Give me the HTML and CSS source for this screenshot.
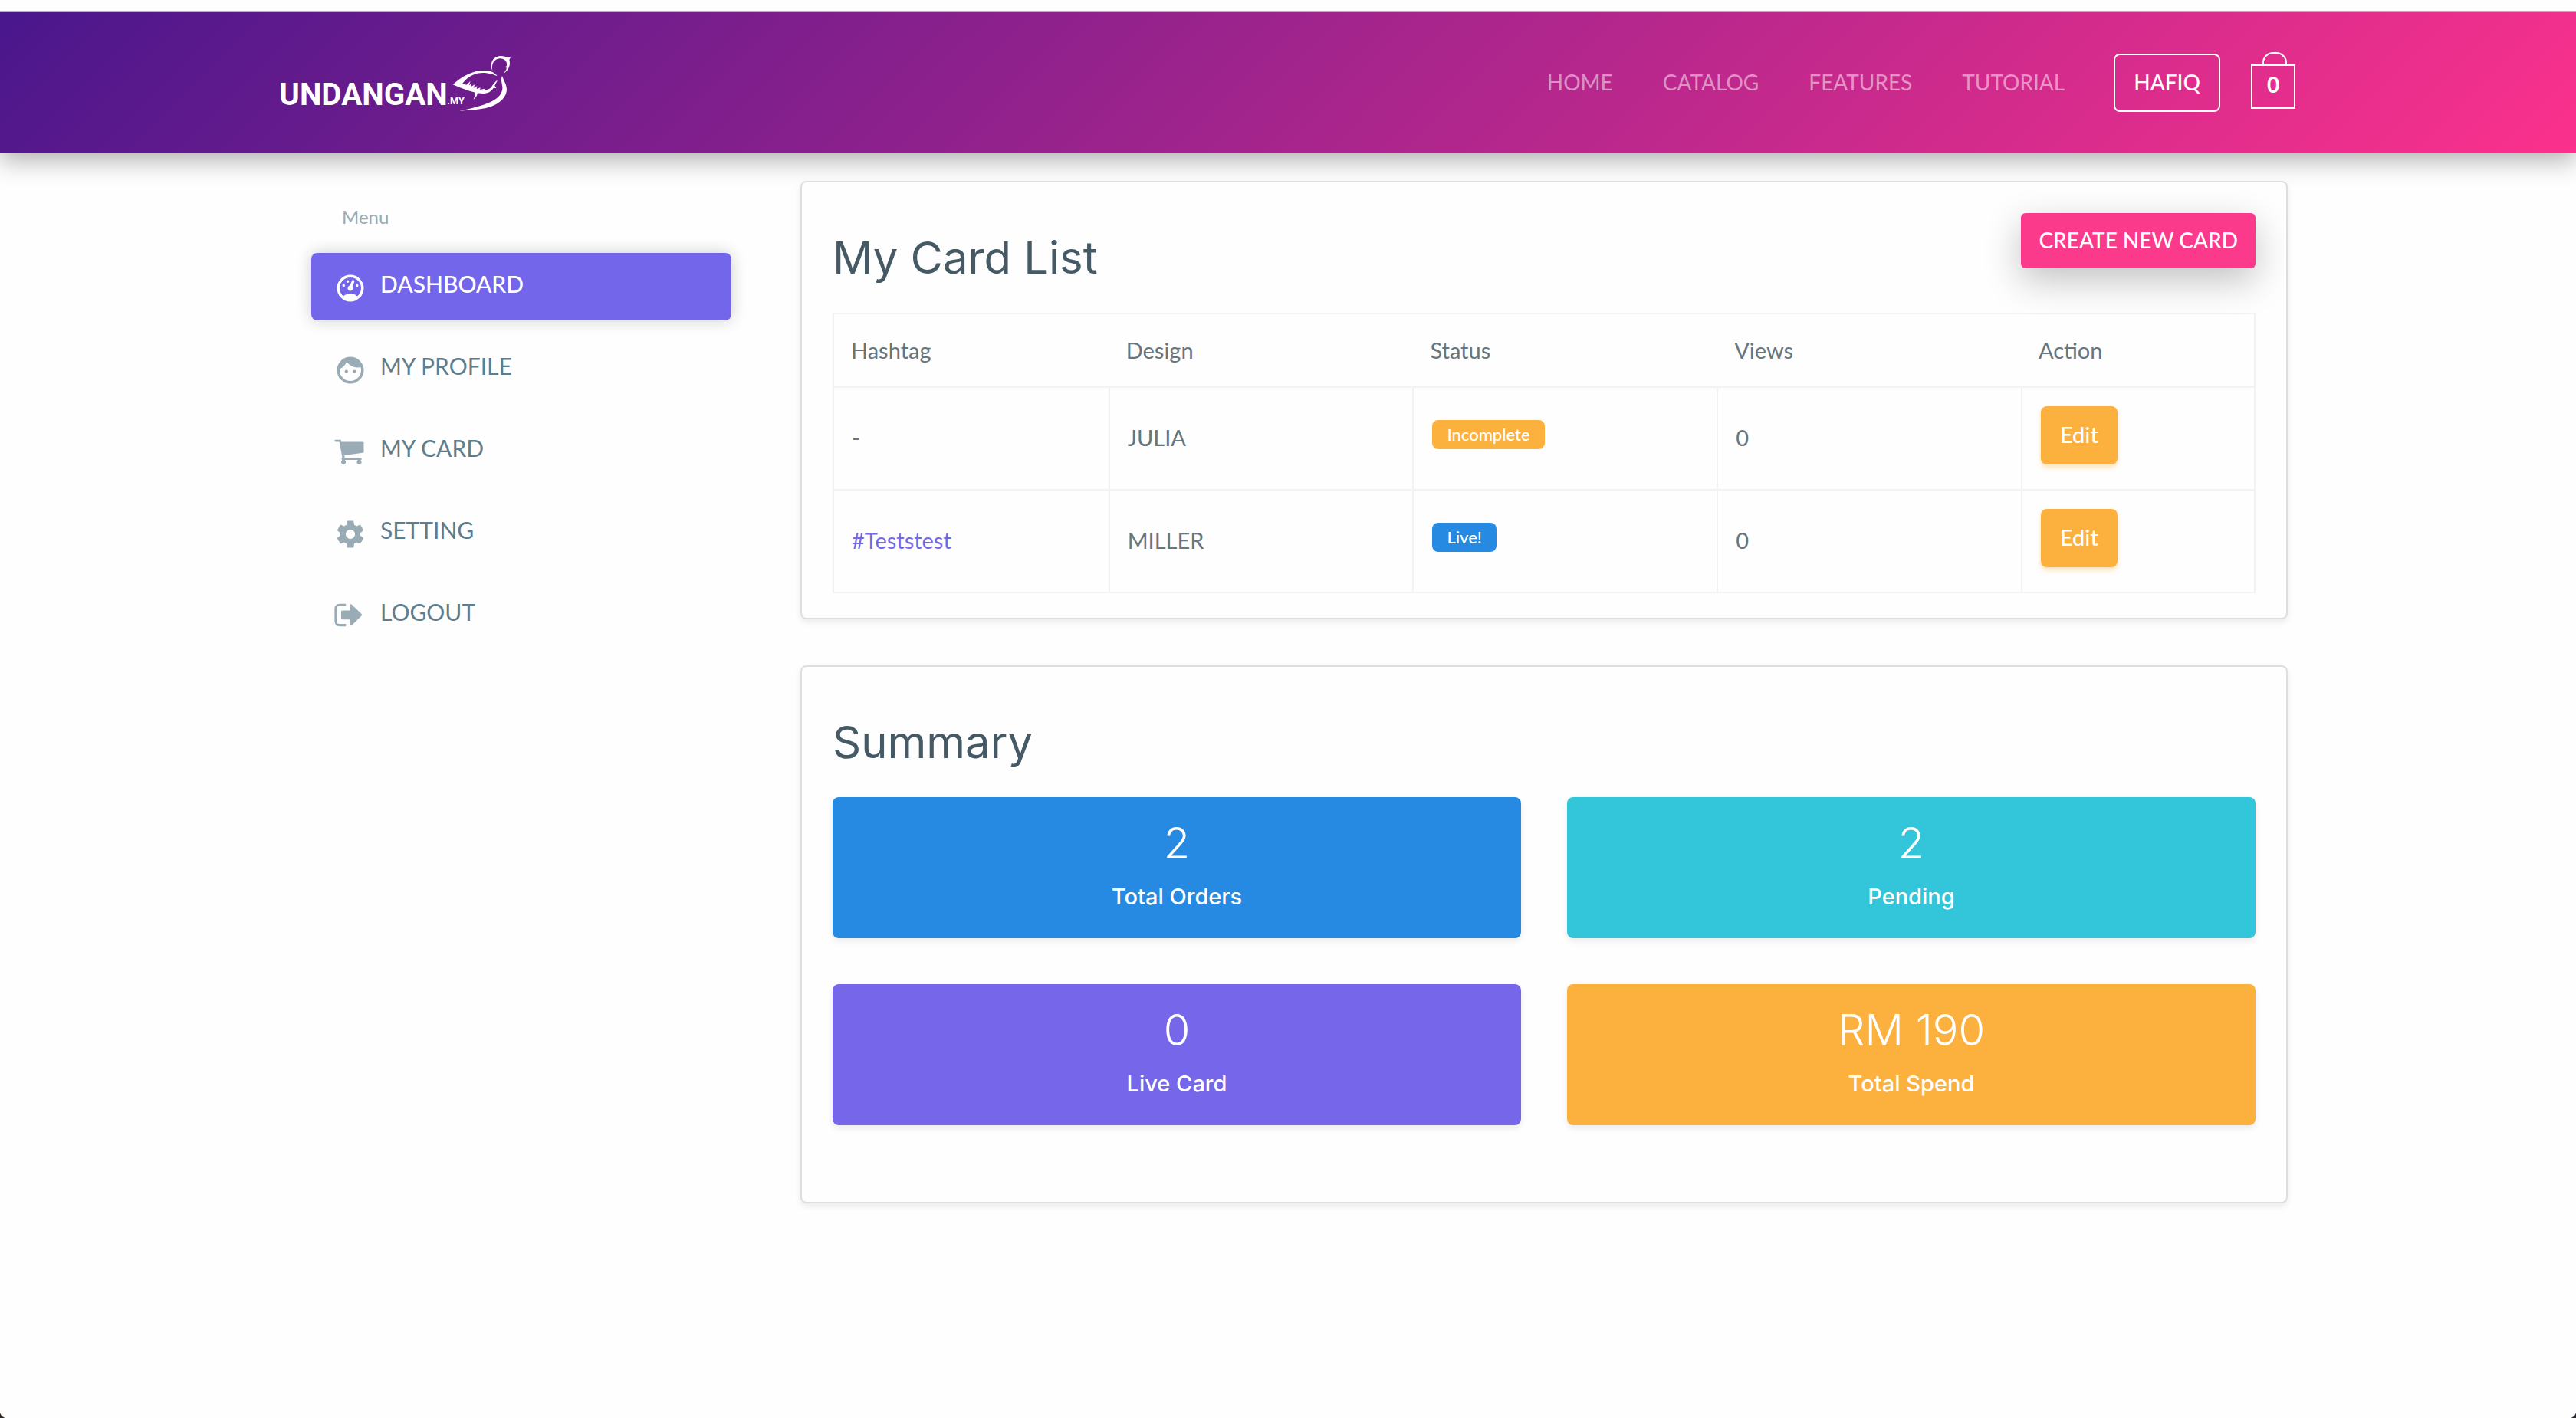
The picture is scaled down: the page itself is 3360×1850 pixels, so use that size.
FILE: index.html
```html
<!DOCTYPE html>
<html lang="en">
<head>
<meta charset="utf-8">
<title>Dashboard - Undangan.my</title>
<link rel="stylesheet" href="styles.css">
</head>
<body>
<div class="top-strip"></div>
<header class="site-header">
  <div class="header-inner">
    <a class="logo" href="#" aria-label="Undangan.my">
      <svg viewBox="78 60 906 225" width="302" height="75">
        <text class="logo-name" x="73" y="259">UNDANGAN</text>
        <text class="logo-tld" x="730" y="256">.MY</text>
        <path d="M907 123C894 94 910 66 941 66C953 66 961 69 966 73L978 71L973 81C979 101 971 122 950 135C956 127 961 120 963 113L957 110L963 104C966 86 951 75 936 76C913 78 902 97 907 123Z"/>
        <path fill-rule="evenodd" d="M752 178C787 146 828 123 875 123C896 123 913 129 923 141C930 146 920 142 905 137C878 130 855 131 836 138C817 145 802 158 790 173C796 176 801 178 805 179L821 164L815 181L826 174L823 186L838 178L833 191L847 184L845 195L860 190L858 198L877 194L874 200C886 199 896 196 902 189C908 180 915 168 928 159L916 182L922 192L911 191C903 205 889 213 868 213C827 211 789 194 752 178Z"/>
        <path d="M838 207L849 206C849 219 843 229 832 236C838 227 840 217 838 207Z"/>
        <path d="M945 143C949 159 963 176 963 199C961 233 926 261 878 271C846 277 812 279 778 281C824 273 868 260 900 246C938 229 948 205 946 187C944 170 939 160 945 143Z"/>
      </svg>
    </a>
    <nav class="main-nav" aria-label="Main">
      <a href="#">HOME</a>
      <a href="#">CATALOG</a>
      <a href="#">FEATURES</a>
      <a href="#">TUTORIAL</a>
    </nav>
    <button class="user-button" type="button">HAFIQ</button>
    <button class="bag" type="button" aria-label="Shopping bag">0</button>
  </div>
</header>

<main class="page">
  <aside class="sidebar">
    <p class="menu-title">Menu</p>
    <nav class="menu" aria-label="Account">
      <a class="menu-item active" href="#">
        <svg class="icon" viewBox="0 0 24 24"><path d="M12,2A10,10 0 0,0 2,12A10,10 0 0,0 12,22A10,10 0 0,0 22,12A10,10 0 0,0 12,2M12,4A8,8 0 0,1 20,12C20,14.4 19,16.5 17.3,18C15.9,16.7 14,16 12,16C10,16 8.2,16.7 6.7,18C5,16.5 4,14.4 4,12A8,8 0 0,1 12,4M14,5.89C13.62,5.9 13.26,6.15 13.1,6.54L11.81,9.77L11.71,10C11,10.13 10.41,10.6 10.14,11.26C9.73,12.29 10.23,13.45 11.26,13.86C12.29,14.27 13.45,13.77 13.86,12.74C14.12,12.08 14,11.32 13.57,10.76L13.67,10.5L14.96,7.29L14.97,7.26C15.17,6.75 14.92,6.17 14.41,5.96C14.28,5.91 14.15,5.89 14,5.89M10,6A1,1 0 0,0 9,7A1,1 0 0,0 10,8A1,1 0 0,0 11,7A1,1 0 0,0 10,6M7,9A1,1 0 0,0 6,10A1,1 0 0,0 7,11A1,1 0 0,0 8,10A1,1 0 0,0 7,9M17,9A1,1 0 0,0 16,10A1,1 0 0,0 17,11A1,1 0 0,0 18,10A1,1 0 0,0 17,9Z"/></svg>
        <span>DASHBOARD</span>
      </a>
      <a class="menu-item" href="#">
        <svg class="icon" viewBox="0 0 24 24"><path d="M9,11.75A1.25,1.25 0 0,0 7.75,13A1.25,1.25 0 0,0 9,14.25A1.25,1.25 0 0,0 10.25,13A1.25,1.25 0 0,0 9,11.75M15,11.75A1.25,1.25 0 0,0 13.75,13A1.25,1.25 0 0,0 15,14.25A1.25,1.25 0 0,0 16.25,13A1.25,1.25 0 0,0 15,11.75M12,2A10,10 0 0,0 2,12A10,10 0 0,0 12,22A10,10 0 0,0 22,12A10,10 0 0,0 12,2M12,20C7.59,20 4,16.41 4,12C4,11.71 4,11.42 4.05,11.14C6.41,10.09 8.28,8.16 9.26,5.77C11.07,8.33 14.05,10 17.42,10C18.2,10 18.95,9.91 19.67,9.74C19.88,10.45 20,11.21 20,12C20,16.41 16.41,20 12,20Z"/></svg>
        <span>MY PROFILE</span>
      </a>
      <a class="menu-item" href="#">
        <svg class="icon" viewBox="141 833 108 108"><path d="M145 845H161Q164 845 164 848V852H237Q240 852 240 855V886Q240 889 237 889L175 897L176 905H230Q233 905 233 909Q233 913 230 913H228A8 8 0 1 1 221 913H176A8 8 0 1 1 168 913Q165 911 165 908Q165 906 168 905L158 852H145Q142 851 142 848Q142 845 145 845Z"/></svg>
        <span>MY CARD</span>
      </a>
      <a class="menu-item" href="#">
        <svg class="icon" viewBox="0 0 24 24"><path d="M12,15.5A3.5,3.5 0 0,1 8.5,12A3.5,3.5 0 0,1 12,8.5A3.5,3.5 0 0,1 15.5,12A3.5,3.5 0 0,1 12,15.5M19.43,12.97C19.47,12.65 19.5,12.33 19.5,12C19.5,11.67 19.47,11.34 19.43,11L21.54,9.37C21.73,9.22 21.78,8.95 21.66,8.73L19.66,5.27C19.54,5.05 19.27,4.96 19.05,5.05L16.56,6.05C16.04,5.66 15.5,5.32 14.87,5.07L14.5,2.42C14.46,2.18 14.25,2 14,2H10C9.75,2 9.54,2.18 9.5,2.42L9.13,5.07C8.5,5.32 7.96,5.66 7.44,6.05L4.95,5.05C4.73,4.96 4.46,5.05 4.34,5.27L2.34,8.73C2.21,8.95 2.27,9.22 2.46,9.37L4.57,11C4.53,11.34 4.5,11.67 4.5,12C4.5,12.33 4.53,12.65 4.57,12.97L2.46,14.63C2.27,14.78 2.21,15.05 2.34,15.27L4.34,18.73C4.46,18.95 4.73,19.03 4.95,18.95L7.44,17.94C7.96,18.34 8.5,18.68 9.13,18.93L9.5,21.58C9.54,21.82 9.75,22 10,22H14C14.25,22 14.46,21.82 14.5,21.58L14.87,18.93C15.5,18.67 16.04,18.34 16.56,17.94L19.05,18.95C19.27,19.03 19.54,18.95 19.66,18.73L21.66,15.27C21.78,15.05 21.73,14.78 21.54,14.63L19.43,12.97Z"/></svg>
        <span>SETTING</span>
      </a>
      <a class="menu-item" href="#">
        <svg class="icon" viewBox="141 1379 108 108"><path d="M180 1391V1398H158Q149 1398 149 1407V1450Q149 1459 158 1459H180V1467H160Q142 1467 142 1449V1409Q142 1391 160 1391ZM195 1394Q197 1391 200 1394L233 1426Q235 1429 233 1431L200 1463Q197 1466 195 1463V1444H168Q164 1444 164 1440V1418Q164 1414 168 1414H195Z"/></svg>
        <span>LOGOUT</span>
      </a>
    </nav>
  </aside>

  <div class="content">
    <section class="card">
      <div class="card-head">
        <h2>My Card List</h2>
        <button class="create-button" type="button">CREATE NEW CARD</button>
      </div>
      <table class="card-table">
        <thead>
          <tr>
            <th class="col-hashtag" scope="col">Hashtag</th>
            <th class="col-wide" scope="col">Design</th>
            <th class="col-wide" scope="col">Status</th>
            <th class="col-wide" scope="col">Views</th>
            <th scope="col">Action</th>
          </tr>
        </thead>
        <tbody>
          <tr>
            <td>-</td>
            <td>JULIA</td>
            <td class="status-cell"><span class="badge badge-warning">Incomplete</span></td>
            <td>0</td>
            <td class="action-cell"><button class="edit-button" type="button">Edit</button></td>
          </tr>
          <tr>
            <td><a class="hashtag" href="#">#Teststest</a></td>
            <td>MILLER</td>
            <td class="status-cell"><span class="badge badge-info">Live!</span></td>
            <td>0</td>
            <td class="action-cell"><button class="edit-button" type="button">Edit</button></td>
          </tr>
        </tbody>
      </table>
    </section>

    <section class="card summary">
      <div class="card-head">
        <h2>Summary</h2>
      </div>
      <div class="tiles">
        <div class="tile tile-blue"><strong>2</strong><span>Total Orders</span></div>
        <div class="tile tile-cyan"><strong>2</strong><span>Pending</span></div>
        <div class="tile tile-purple"><strong>0</strong><span>Live Card</span></div>
        <div class="tile tile-orange"><strong>RM 190</strong><span>Total Spend</span></div>
      </div>
    </section>
  </div>
</main>
</body>
</html>
```
FILE: styles.css
```css
* {
  box-sizing: border-box;
}

body {
  margin: 0;
  background: #fefefe;
  color: #67757c;
  font: 28px/42px Lato, "Open Sans", sans-serif;
}

/* Dark rounded window corners */
body::before,
body::after {
  content: "";
  position: fixed;
  bottom: 0;
  width: 10px;
  height: 10px;
}

body::before {
  left: 0;
  background: radial-gradient(circle at 100% 0, transparent 10px, #2b2522 11px);
}

body::after {
  right: 0;
  background: radial-gradient(circle at 0 0, transparent 10px, #24272c 11px);
}

a {
  color: inherit;
  text-decoration: none;
}

button {
  font: inherit;
  cursor: pointer;
}

h2, p {
  margin: 0;
}

.top-strip {
  position: relative;
  z-index: 1;
  height: 16px;
  background: #fefefe;
  border-bottom: 1px solid #b5b0bb;
}

/* Header */
.site-header {
  height: 184px;
  background: linear-gradient(135deg, #4a178c, #fb318c);
  box-shadow: 0 10px 30px rgba(0, 0, 0, 0.3);
}

.header-inner {
  display: flex;
  align-items: center;
  max-width: 2628px;
  height: 100%;
  margin: 0 auto;
}

.logo {
  display: flex;
  margin-right: auto;
}

.logo svg {
  display: block;
  fill: #fff;
  overflow: visible;
}

.logo-name {
  font: 700 121px Roboto, sans-serif;
}

.logo-tld {
  font: 700 38px Roboto, sans-serif;
}

.main-nav {
  display: flex;
  gap: 65px;
  margin-right: 64px;
  padding-bottom: 2px;
  color: rgba(255, 255, 255, 0.5);
}

.user-button {
  height: 76px;
  padding: 0 24px 2px;
  margin-right: 40px;
  background: none;
  border: 2px solid #fff;
  border-radius: 8px;
  color: #fff;
  font-weight: 500;
}

.bag {
  position: relative;
  width: 58px;
  height: 58px;
  margin-top: 10px;
  padding: 0 0 6px;
  background: none;
  border: 2px solid #fff;
  color: #fff;
  font-weight: 700;
}

.bag::before {
  content: "";
  position: absolute;
  left: 13px;
  bottom: 100%;
  width: 28px;
  height: 16px;
  border: 2px solid #fff;
  border-bottom: 0;
  border-radius: 14px 14px 0 0;
}

/* Page */
.page {
  display: flex;
  gap: 90px;
  max-width: 2640px;
  margin: 0 auto;
  padding: 36px 16px 60px 46px;
}

.sidebar {
  flex: 0 0 548px;
  padding-top: 29px;
}

.menu-title {
  padding-left: 40px;
  margin-bottom: 29px;
  color: #99abb4;
  font-size: 24px;
  line-height: 36px;
}

.menu {
  display: flex;
  flex-direction: column;
  gap: 19px;
}

.menu-item {
  display: flex;
  gap: 18px;
  height: 88px;
  padding: 19px 30px;
  border-radius: 8px;
  color: #607d8b;
  font-size: 30px;
}

.menu-item .icon {
  width: 42px;
  height: 42px;
  margin-top: 6px;
  fill: #99abb4;
}

.menu-item.active {
  background: #7466ea;
  box-shadow: 0 0 20px rgba(0, 0, 0, 0.2);
  color: #fff;
  font-weight: 500;
}

.menu-item.active .icon {
  fill: #fff;
}

.content {
  flex: 1;
  display: flex;
  flex-direction: column;
  gap: 60px;
  min-width: 0;
}

.card {
  padding: 40px 40px 32px;
  background: #fefefe;
  border: 2px solid #dedede;
  border-radius: 8px;
  box-shadow: 0 4px 8px rgba(0, 0, 0, 0.08);
}

.card.summary {
  padding-bottom: 100px;
}

.card-head {
  display: flex;
  align-items: flex-start;
  justify-content: space-between;
  margin-bottom: 42px;
}

h2 {
  margin-top: 28px;
  color: #455a64;
  font: 400 58px/60px Inter, sans-serif;
}

.create-button {
  height: 72px;
  padding: 0 23px 2px;
  background: #fb3a8c;
  border: 0;
  border-radius: 6px;
  box-shadow: 0 16px 48px rgba(0, 0, 0, 0.24);
  color: #fff;
  font-weight: 500;
}

/* Table */
.card-table {
  width: 100%;
  table-layout: fixed;
  border-collapse: collapse;
  border: 2px solid #f2f2f2;
  font-size: 29px;
}

.card-table th {
  height: 96px;
  padding: 0 22px;
  border-bottom: 2px solid #f2f2f2;
  font-weight: 400;
  text-align: left;
}

.card-table td {
  height: 134px;
  padding: 0 23px 2px;
  border: 2px solid #f2f2f2;
}

.col-hashtag {
  width: 19.4%;
}

.col-wide {
  width: 21.4%;
}

.card-table .status-cell {
  padding-left: 24px;
  padding-bottom: 10px;
}

.card-table .action-cell {
  padding-left: 24px;
  padding-bottom: 8px;
}

.hashtag {
  color: #7466ea;
}

.badge {
  display: block;
  width: fit-content;
  padding: 0 19px;
  border-radius: 8px;
  color: #fff;
  font-size: 22px;
  font-weight: 500;
  line-height: 38px;
}

.badge-warning {
  background: #fcb03e;
}

.badge-info {
  background: #268ae2;
}

.edit-button {
  display: block;
  height: 76px;
  padding: 0 25px 2px;
  background: #fcb03e;
  border: 0;
  border-radius: 8px;
  box-shadow: 0 4px 6px rgba(252, 176, 62, 0.35);
  color: #fff;
  font-weight: 500;
}

/* Summary */
.tiles {
  display: grid;
  grid-template-columns: 1fr 1fr;
  gap: 60px;
}

.tile {
  display: flex;
  flex-direction: column;
  align-items: center;
  gap: 14px;
  padding: 24px 24px 34px;
  border-radius: 8px;
  box-shadow: 0 4px 8px rgba(0, 0, 0, 0.08);
  color: #fff;
  font: 500 29px/40px Inter, sans-serif;
}

.tile strong {
  font-size: 56px;
  font-weight: 300;
  line-height: 72px;
}

.tile-blue {
  background: #268ae2;
}

.tile-cyan {
  background: #33c6da;
}

.tile-purple {
  background: #7666e9;
}

.tile-orange {
  background: #fcb03e;
}
```
